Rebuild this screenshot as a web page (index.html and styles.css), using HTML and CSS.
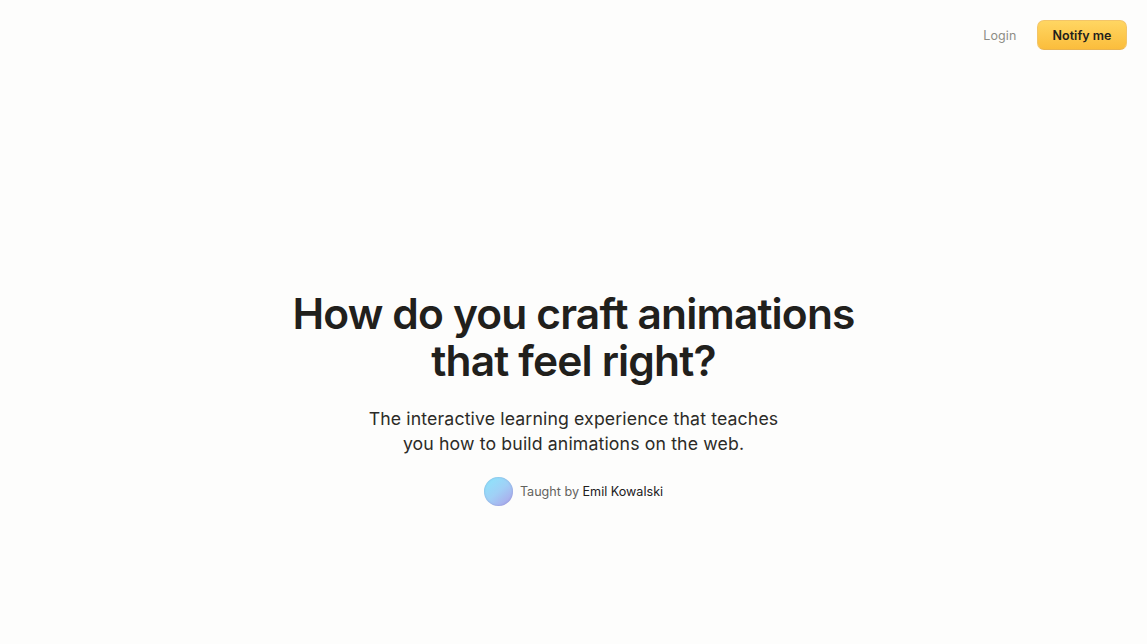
FILE: index.html
```html
<!DOCTYPE html>
<html lang="en">
<head>
    <meta charset="UTF-8">
    <meta name="viewport" content="width=device-width, initial-scale=1.0">
    <title>Animations on the Web</title>
    <link rel="stylesheet" href="styles.css">
</head>
<body>
    <header class="top">
        <a class="login" href="#">Login</a>
        <a class="notify" href="#">Notify me</a>
    </header>
    <main class="hero">
        <h1>How do you craft animations<br>that feel right?</h1>
        <p class="lead">The interactive learning experience that teaches<br>you how to build animations on the web.</p>
        <div class="teacher">
            <span class="avatar"></span>
            <span class="taught">Taught by <span class="name">Emil Kowalski</span></span>
        </div>
    </main>
</body>
</html>
```

FILE: styles.css
```css
* {
    margin: 0;
    padding: 0;
    box-sizing: border-box;
}
html, body {
    height: 100%;
}
body {
    font-family: Inter, sans-serif;
    background-color: #fdfdfc;
    color: #21201c;
    overflow: hidden;
}
a {
    text-decoration: none;
}
.top {
    display: flex;
    justify-content: flex-end;
    align-items: center;
    gap: 20px;
    padding: 20px 20px 0 0;
}
.login {
    font-size: 12.5px;
    letter-spacing: 0.1px;
    color: #8d8d86;
    margin-right: 0.5px;
}
.notify {
    display: flex;
    align-items: center;
    justify-content: center;
    width: 90px;
    height: 30px;
    font-size: 12.5px;
    font-weight: 600;
    color: #21201c;
    background: linear-gradient(180deg, #ffd662 0%, #fbbd3c 100%);
    border: 1px solid #f3c568;
    border-bottom-color: #eab450;
    border-radius: 7px;
}
.hero {
    display: flex;
    flex-direction: column;
    align-items: center;
    text-align: center;
    padding-top: 240px;
}
h1 {
    font-size: 42.5px;
    line-height: 47px;
    font-weight: 600;
    letter-spacing: -0.85px;
}
.lead {
    margin-top: 21.5px;
    font-size: 17.7px;
    line-height: 25px;
    letter-spacing: 0.13px;
    color: #2c2b27;
}
.teacher {
    display: flex;
    align-items: center;
    gap: 7px;
    margin-top: 21.5px;
}
.avatar {
    width: 29px;
    height: 29px;
    border-radius: 50%;
    background: linear-gradient(140deg, #8ee4fb 8%, #a0d0f6 50%, #a8b4ee 78%, #a39ce6 100%);
    box-shadow: inset 0 0 2px rgba(90, 90, 170, 0.4);
}
.taught {
    font-size: 12.6px;
    color: #63635e;
}
.name {
    color: #21201c;
}
```
